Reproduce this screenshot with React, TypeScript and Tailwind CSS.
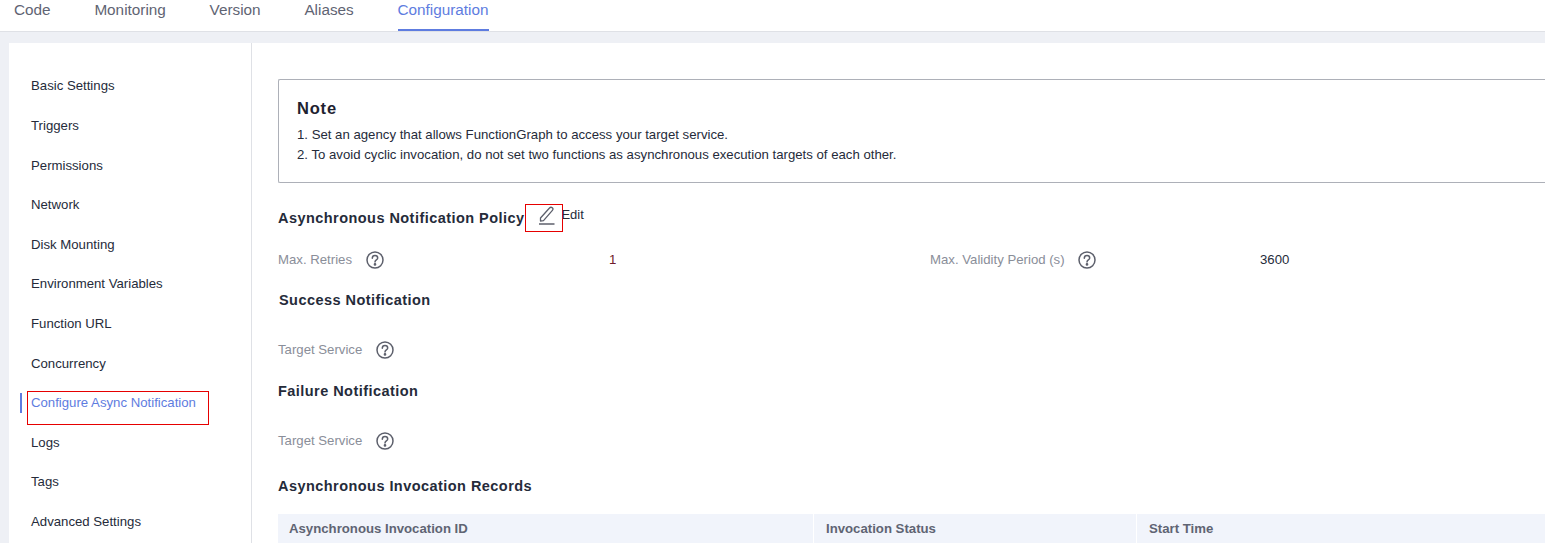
import React from "react";

const menu = [
  "Basic Settings",
  "Triggers",
  "Permissions",
  "Network",
  "Disk Mounting",
  "Environment Variables",
  "Function URL",
  "Concurrency",
  "Configure Async Notification",
  "Logs",
  "Tags",
  "Advanced Settings",
];

const tabs = ["Code", "Monitoring", "Version", "Aliases", "Configuration"];

function HelpIcon() {
  return (
    <svg width="18" height="18" viewBox="0 0 18 18" fill="none" stroke="#5c5f6b" strokeWidth="1.5" className="shrink-0">
      <circle cx="9" cy="9" r="8" />
      <path d="M6.3 7.2c0-1.5 1.2-2.6 2.7-2.6s2.7 1 2.7 2.4c0 2-2.7 1.9-2.7 3.9" strokeLinecap="round" />
      <circle cx="9" cy="13.4" r="0.6" fill="#5c5f6b" />
    </svg>
  );
}

export default function App() {
  return (
    <div className="h-[543px] overflow-hidden bg-[#eef0f5] font-['Liberation_Sans',Arial,sans-serif] text-[#252b3a]">
      {/* Tabs */}
      <div className="flex h-[32px] gap-[43.8px] border-b border-[#dfe1e6] bg-white pl-[14px] text-[15.3px] text-[#5f6473]">
        {tabs.map((t) => (
          <div
            key={t}
            className={
              t === "Configuration"
                ? "h-[31px] border-b-2 border-[#5e7ce0] leading-[19px] text-[#5e7ce0]"
                : "h-[31px] leading-[19px]"
            }
          >
            {t}
          </div>
        ))}
      </div>

      <div className="ml-[9px] mt-[11px] flex h-[500px] bg-white">
        {/* Sidebar Navigation */}
        <aside className="relative w-[243px] shrink-0 border-r border-[#dfe1e6] pt-[23.4px] text-[13.2px]">
          {menu.map((m) => {
            const active = m === "Configure Async Notification";
            return (
              <div key={m} className={active ? "relative h-[39.6px] pl-[22px] leading-[39px] text-[#5e7ce0]" : "h-[39.6px] pl-[22px] leading-[39px]"}>
                {active && <span className="absolute left-[11px] top-[9.8px] h-[20px] w-[2px] bg-[#5e7ce0]" />}
                {m}
                {active && <span className="absolute left-[18px] top-[7.8px] h-[34px] w-[182px] border border-[#e60000]" />}
              </div>
            );
          })}
        </aside>

        {/* Main Page Content */}
        <main className="min-w-0 flex-1 pl-[26px] pt-[36px]">
          <div className="h-[104px] rounded-l-[2px] border border-r-0 border-[#adb0b8] pl-[18px] pt-[19px]">
            <div className="text-[16.5px] font-bold leading-[18px] tracking-[0.8px] text-[#1f2230]">Note</div>
            <div className="mt-[8px] text-[13.2px] leading-[20px]">
              <div>1. Set an agency that allows FunctionGraph to access your target service.</div>
              <div>2. To avoid cyclic invocation, do not set two functions as asynchronous execution targets of each other.</div>
            </div>
          </div>

          <div className="relative mt-[25px] flex h-[20px] items-center">
            <h3 className="pt-[2px] text-[14.5px] font-bold tracking-[0.45px]">Asynchronous Notification Policy</h3>
            <div className="relative ml-[1px] flex h-[28px] w-[38px] items-start border border-[#e60000] pl-[13px] pt-[1px]">
              <svg width="17" height="19" viewBox="0 0 17 19" fill="none" stroke="#5c5f6b" strokeWidth="1.3">
                <path d="M1.5 15V12L10.5 2c.8-.9 2-.9 2.8-.2.8.7.8 1.8.1 2.6L4.5 14.6z" strokeLinejoin="round" />
                <path d="M0 18h15.5" strokeWidth="1.5" />
              </svg>
            </div>
            <span className="relative top-[-3px] ml-[-2px] text-[13px]">Edit</span>
          </div>

          <div className="mt-[22px] flex h-[20px] items-center text-[13.2px]">
            <div className="flex w-[331px] items-center">
              <span className="text-[#8a8e99]">Max. Retries</span>
              <span className="ml-[14px]"><HelpIcon /></span>
            </div>
            <div className="w-[321px] text-[#6f1c2c]">1</div>
            <div className="flex w-[330px] items-center">
              <span className="text-[#8a8e99]">Max. Validity Period (s)</span>
              <span className="ml-[13px]"><HelpIcon /></span>
            </div>
            <div>3600</div>
          </div>

          <h3 className="mt-[20px] h-[20px] pl-[1px] text-[14.5px] font-bold leading-[20px] tracking-[0.45px]">Success Notification</h3>

          <div className="mt-[30px] flex h-[20px] items-center text-[13.2px]">
            <span className="text-[#8a8e99]">Target Service</span>
            <span className="ml-[14px]"><HelpIcon /></span>
          </div>

          <h3 className="mt-[21px] h-[20px] text-[14.5px] font-bold leading-[20px] tracking-[0.45px]">Failure Notification</h3>

          <div className="mt-[30px] flex h-[20px] items-center text-[13.2px]">
            <span className="text-[#8a8e99]">Target Service</span>
            <span className="ml-[14px]"><HelpIcon /></span>
          </div>

          <h3 className="mt-[25px] h-[20px] text-[14.5px] font-bold leading-[20px] tracking-[0.45px]">Asynchronous Invocation Records</h3>

          <div className="mt-[18px] flex h-[29px] gap-[1px] text-[13.2px] font-bold leading-[29px] text-[#5f6473]">
            <div className="w-[535px] bg-[#f1f4fb] pl-[11px]">Asynchronous Invocation ID</div>
            <div className="w-[322px] bg-[#f1f4fb] pl-[12px]">Invocation Status</div>
            <div className="flex-1 bg-[#f1f4fb] pl-[12px]">Start Time</div>
          </div>
        </main>
      </div>
    </div>
  );
}
